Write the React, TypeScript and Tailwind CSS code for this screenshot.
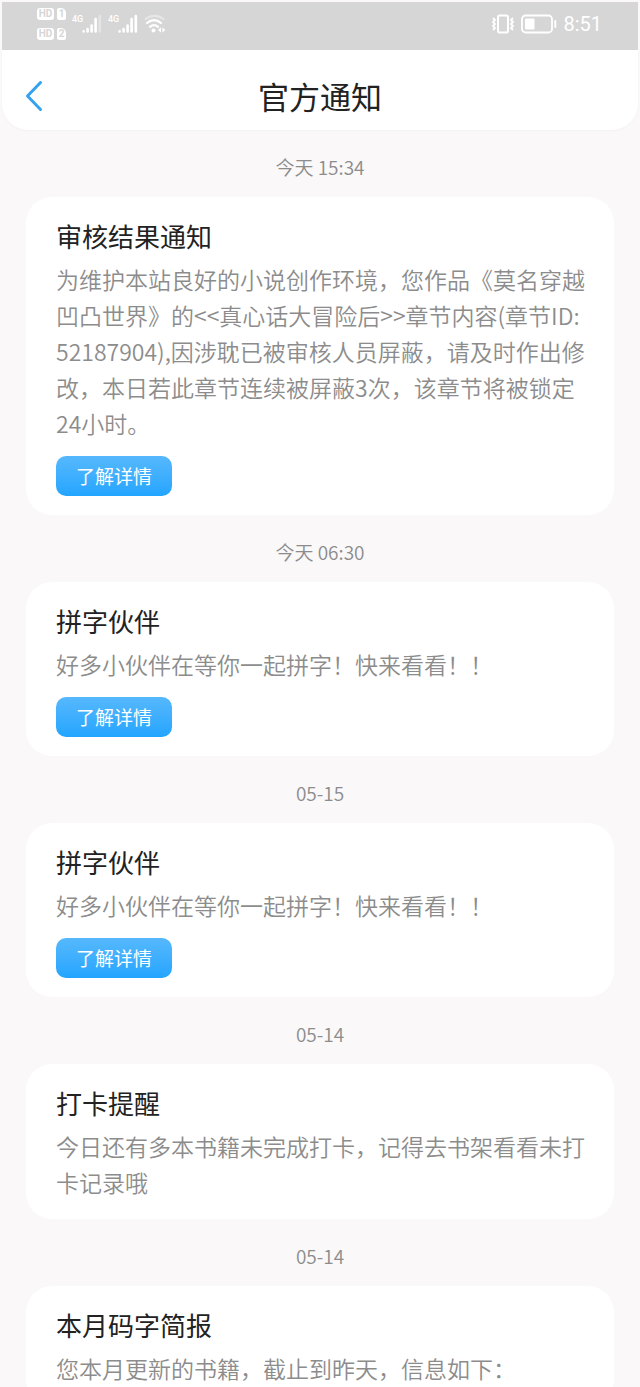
type Notice = {
  time: string;
  title: string;
  body: string;
  action?: string;
};

const notices: Notice[] = [
  {
    time: '今天 15:34',
    title: '审核结果通知',
    body: '为维护本站良好的小说创作环境，您作品《莫名穿越凹凸世界》的<<真心话大冒险后>>章节内容(章节ID: 52187904),因涉耽已被审核人员屏蔽，请及时作出修改，本日若此章节连续被屏蔽3次，该章节将被锁定24小时。',
    action: '了解详情',
  },
  { time: '今天 06:30', title: '拼字伙伴', body: '好多小伙伴在等你一起拼字！快来看看！！', action: '了解详情' },
  { time: '05-15', title: '拼字伙伴', body: '好多小伙伴在等你一起拼字！快来看看！！', action: '了解详情' },
  { time: '05-14', title: '打卡提醒', body: '今日还有多本书籍未完成打卡，记得去书架看看未打卡记录哦' },
  { time: '05-14', title: '本月码字简报', body: '您本月更新的书籍，截止到昨天，信息如下：' },
];

function SimBadge({ slot }: { slot: string }) {
  return (
    <div className="flex gap-[3px] text-[10px] leading-[12px] font-bold text-[#d6d6d6]">
      <span className="w-[17px] h-3 rounded-[3px] bg-white text-center">HD</span>
      <span className="w-[9px] h-3 rounded-[2px] rounded-tr-[5px] bg-white text-center">{slot}</span>
    </div>
  );
}

function Signal({ full }: { full?: boolean }) {
  return (
    <div className="flex items-start">
      <span className="w-2.5 text-[9px] leading-[10px] font-medium">4G</span>
      <svg viewBox="0 0 20 20" className="w-5 h-5" stroke="currentColor" strokeWidth="2.6" strokeLinecap="round">
        <path d="M1.6 17.4v-.2M5.6 17.4v-2.4M9.6 17.4v-5.8M13.6 17.4V5" />
        <path d="M17.8 17.4V2" opacity={full ? 1 : 0.35} />
      </svg>
    </div>
  );
}

function Wifi() {
  return (
    <svg viewBox="0 0 22 20" className="w-[22px] h-5" fill="none" stroke="currentColor" strokeWidth="2.2" strokeLinecap="round">
      <path d="M1.5 5C7 .8 14 .8 19.5 5" opacity="0.4" />
      <path d="M3 9C7 5.2 13 5.2 17 9" />
      <path d="M6 12.8C8.5 10.6 11.5 10.6 14 12.8" />
      <circle cx="9.5" cy="16.6" r="2" fill="currentColor" stroke="none" />
      <path d="M17 13.2v5.4l-3-2.7zM18.4 13.2v5.4l3-2.7z" fill="currentColor" stroke="none" />
    </svg>
  );
}

function Vibrate() {
  return (
    <svg viewBox="0 0 24 20" className="w-6 h-5" fill="none" stroke="currentColor" strokeWidth="2" strokeLinejoin="round">
      <rect x="7" y="1.5" width="10" height="17" rx="1.8" />
      <path d="M2 4l2 2-2 2 2 2-2 2 2 2-2 2" strokeWidth="1.8" />
      <path d="M22 4l-2 2 2 2-2 2 2 2-2 2 2 2" strokeWidth="1.8" />
    </svg>
  );
}

function Battery() {
  return (
    <svg viewBox="0 0 36 20" className="w-9 h-5" fill="none" stroke="currentColor" strokeWidth="1.8">
      <rect x="1" y="1.5" width="30" height="17" rx="3.5" />
      <rect x="4" y="4.5" width="9.5" height="11" rx="1" fill="currentColor" stroke="none" />
      <path d="M34.3 7v6" strokeWidth="2" strokeLinecap="round" />
    </svg>
  );
}

function NoticeCard({ time, title, body, action }: Notice) {
  return (
    <li>
      <div className="flex items-center justify-center h-[67px] pt-1.5 text-[19px] leading-6 font-[350] text-[#8c8c8c]">
        <time>{time}</time>
      </div>
      <article className="mx-[26px] pt-[21px] pb-[19px] pl-[30px] pr-6 rounded-[26px] bg-white">
        <h2 className="text-[26px] leading-9 text-[#222222]">{title}</h2>
        <p className="mt-[7px] text-[23px] leading-9 font-[350] text-[#8c8c8c]">{body}</p>
        {action && (
          <button
            type="button"
            className="block mt-[15px] h-10 w-[116px] rounded-[10px] bg-linear-to-b from-[#55b8fd] to-[#20a5ff] text-[19px] leading-10 text-white"
          >
            {action}
          </button>
        )}
      </article>
    </li>
  );
}

export default function App() {
  return (
    <div
      lang="zh-CN"
      className="flex flex-col h-screen overflow-hidden bg-[#faf8f9] font-['Noto_Sans_CJK_SC',sans-serif]"
    >
      {/* Status bar */}
      <div className="shrink-0 flex items-center h-12 mt-0.5 mx-0.5 pl-[35px] pr-9 pb-1 bg-[#d6d6d6] text-white font-[Roboto,'Noto_Sans_CJK_SC',sans-serif]">
        <div className="flex flex-col gap-2">
          <SimBadge slot="1" />
          <SimBadge slot="2" />
        </div>
        <div className="flex items-center gap-1.5 ml-1.5">
          <Signal />
          <Signal full />
          <Wifi />
        </div>
        <div className="flex items-center gap-1.5 ml-auto">
          <Vibrate />
          <Battery />
          <span className="text-[20px] leading-6">8:51</span>
        </div>
      </div>

      {/* Title bar */}
      <header className="shrink-0 grid grid-cols-[64px_1fr_64px] items-center h-20 mx-0.5 pt-3 rounded-b-[26px] bg-white shadow-[0_1px_2px_rgba(0,0,0,0.03)]">
        <button type="button" aria-label="返回" className="flex items-center h-12 pl-[22px] text-[#33a3ee]">
          <svg viewBox="0 0 20 32" className="w-5 h-8" fill="none" stroke="currentColor" strokeWidth="3" strokeLinecap="round" strokeLinejoin="round">
            <path d="M16.5 2.5L3.5 16L16.5 29.5" />
          </svg>
        </button>
        <h1 className="text-center text-[31px] leading-10 text-[#222222]">官方通知</h1>
      </header>

      <main className="flex-1 min-h-0 overflow-hidden">
        <ul>
          {notices.map((notice, i) => (
            <NoticeCard key={i} {...notice} />
          ))}
        </ul>
      </main>
    </div>
  );
}
